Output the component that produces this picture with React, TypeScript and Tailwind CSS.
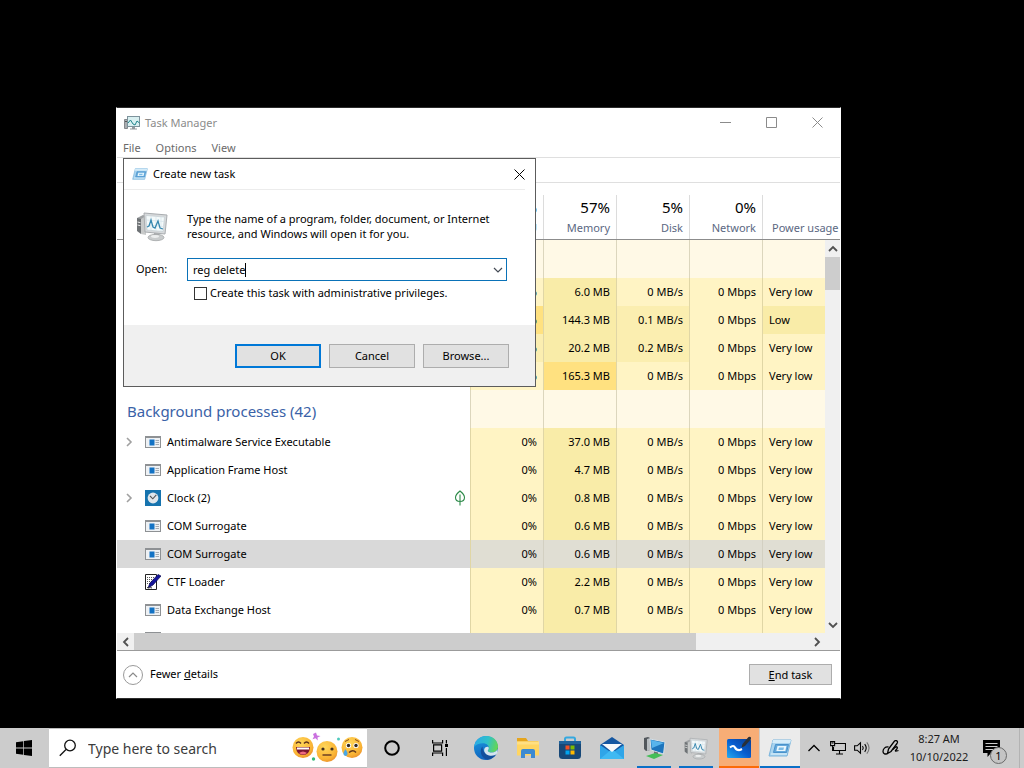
import { useState, type ReactNode } from "react";

type Heat = "light" | "mid" | "warm" | "hot";
type Cell = { text: string; heat: Heat };
type IconName = "window" | "clock" | "ctf";
type Process = {
  name: string;
  icon?: IconName;
  expandable?: boolean;
  eco?: boolean;
  selected?: boolean;
  cells: Cell[];
};

const HEAT: Record<Heat, string> = {
  light: "bg-[#fff4c4]",
  mid: "bg-[#f9eca8]",
  warm: "bg-[#fbeeb0]",
  hot: "bg-[#ffe180]",
};

function usage(
  cpu: string,
  memory: string,
  disk: string,
  power: string,
  heats: Heat[] = ["light", "mid", "light", "light", "light"],
): Cell[] {
  return [cpu, memory, disk, "0 Mbps", power].map((text, i) => ({ text, heat: heats[i] }));
}

const APPS: Process[] = [
  { name: "", cells: usage("0%", "6.0 MB", "0 MB/s", "Very low") },
  { name: "", cells: usage("0%", "144.3 MB", "0.1 MB/s", "Low", ["hot", "mid", "warm", "light", "mid"]) },
  { name: "", cells: usage("0%", "20.2 MB", "0.2 MB/s", "Very low", ["warm", "mid", "warm", "light", "light"]) },
  { name: "", cells: usage("0%", "165.3 MB", "0 MB/s", "Very low", ["light", "hot", "light", "light", "light"]) },
];

const BACKGROUND: Process[] = [
  { name: "Antimalware Service Executable", icon: "window", expandable: true, cells: usage("0%", "37.0 MB", "0 MB/s", "Very low") },
  { name: "Application Frame Host", icon: "window", cells: usage("0%", "4.7 MB", "0 MB/s", "Very low") },
  { name: "Clock (2)", icon: "clock", expandable: true, eco: true, cells: usage("0%", "0.8 MB", "0 MB/s", "Very low") },
  { name: "COM Surrogate", icon: "window", cells: usage("0%", "0.6 MB", "0 MB/s", "Very low") },
  { name: "COM Surrogate", icon: "window", selected: true, cells: usage("0%", "0.6 MB", "0 MB/s", "Very low") },
  { name: "CTF Loader", icon: "ctf", cells: usage("0%", "2.2 MB", "0 MB/s", "Very low") },
  { name: "Data Exchange Host", icon: "window", cells: usage("0%", "0.7 MB", "0 MB/s", "Very low") },
  { name: "", icon: "window", cells: usage("", "", "", "").map((c) => ({ ...c, text: "" })) },
];

/* ---------- small icons ---------- */

function Chevron({ dir, className = "", stroke = 1.5 }: { dir: "up" | "down" | "left" | "right"; className?: string; stroke?: number }) {
  const d = { up: "M1 7 5 3l4 4", down: "M1 3l4 4 4-4", left: "M7 1 3 5l4 4", right: "M3 1l4 4-4 4" }[dir];
  return (
    <svg viewBox="0 0 10 10" className={className} fill="none" stroke="currentColor" strokeWidth={stroke} aria-hidden="true">
      <path d={d} />
    </svg>
  );
}

function CloseIcon({ className = "" }: { className?: string }) {
  return (
    <svg viewBox="0 0 11 11" className={className} fill="none" stroke="currentColor" aria-hidden="true">
      <path d="M.5.5l10 10M10.5.5l-10 10" />
    </svg>
  );
}

function ProcessIcon({ name }: { name: IconName }) {
  if (name === "clock") {
    return (
      <svg viewBox="0 0 16 16" className="size-4" aria-hidden="true">
        <rect width="16" height="16" fill="#1673ae" />
        <circle cx="8" cy="8" r="5.4" fill="#dfe6ec" />
        <path d="M5 6 7.800 8.800l3.500-4" stroke="#555" strokeWidth="1.1" fill="none" />
      </svg>
    );
  }
  if (name === "ctf") {
    return (
      <svg viewBox="0 0 16 16" className="size-4" aria-hidden="true">
        <path d="M.5.500h11v15H.5z" fill="#fff" stroke="#222" />
        <path d="M2 3.500h8M2 5.500h8M2 7.500h6M2 9.500h5" stroke="#555" strokeDasharray="1 1" />
        <path d="M13 .500l3 1.500-8 9-5 3 2-5z" fill="#15159a" stroke="#08084e" strokeWidth=".7" />
        <path d="M2 13.500c2 1 3-.5 5 .5" stroke="#333" fill="none" />
      </svg>
    );
  }
  return (
    <svg viewBox="0 0 16 16" className="size-4" aria-hidden="true">
      <rect x=".5" y="2.500" width="15" height="11" fill="#eef1f4" stroke="#8e9194" />
      <path d="M0 3h16" stroke="#8e9194" strokeWidth="2" />
      <rect x="4.500" y="5.500" width="5" height="6" fill="#1272c4" />
      <path d="M10.500 6.500H14M10.500 8.500H14M10.500 10.500H14" stroke="#a4abb3" />
    </svg>
  );
}

function MonitorIcon({ className = "" }: { className?: string }) {
  return (
    <svg viewBox="0 0 16 16" className={className} aria-hidden="true">
      <path d="M.5 4.500h3v9h-3z" fill="#a9aeb2" stroke="#85898d" />
      <path d="M1 6.500h2" stroke="#555" />
      <rect x="3.500" y="1.500" width="12" height="10" fill="#d9f0f1" stroke="#7d939c" />
      <path d="M4 8l2.500-3 2.500 4 2 1 2-4 2.500 2" stroke="#21858d" fill="none" />
      <path d="M8 12h3v1.500h2v1H6v-1h2z" fill="#91979c" />
    </svg>
  );
}

function LargeMonitorIcon({ className = "" }: { className?: string }) {
  return (
    <svg viewBox="0 0 32 32" className={className} aria-hidden="true">
      <path d="M1 8l6-3 3 1v18l-5-1-4-3z" fill="#9fa2a4" />
      <path d="M1 8l4 1v15l-4-3z" fill="#6f7376" />
      <path d="M5 9l5-3v19l-5-1z" fill="#c8caca" />
      <path d="M1.500 12l3 .7M1.500 15l3 .7" stroke="#e7e7e7" />
      <path d="M8 3l23 2-2 19-20-2z" fill="#d7dadc" stroke="#a9adb0" />
      <path d="M10 5.500l18.500 1.600L27 21.500 11 20z" fill="#f4fafb" stroke="#bfc9ce" strokeWidth=".6" />
      <path d="M10.500 10l17.500 1.500M10.700 15l17 1.500M15 6v14M20 6.500v14M25 7v14" stroke="#d4e3e9" strokeWidth=".7" />
      <path d="M11 17l2-1 2-6 2 7 2 1 3-7 2 7 3 1" stroke="#3688b0" strokeWidth="1.300" fill="none" />
      <path d="M18 23l5 .5 1 3h-6z" fill="#a8abad" />
      <ellipse cx="20" cy="27.500" rx="8" ry="3.200" fill="#c9cccd" stroke="#9c9fa1" strokeWidth=".7" />
      <ellipse cx="19" cy="26.500" rx="4" ry="1.400" fill="#eceeee" />
    </svg>
  );
}

function RunIcon({ className = "" }: { className?: string }) {
  return (
    <svg viewBox="0 0 24 20" className={className} aria-hidden="true">
      <path d="M5 2h18l-4 16H1z" fill="#a9d4ef" stroke="#79b4dc" />
      <path d="M5 2h18l-.8 3H4.200z" fill="#d5ecf9" />
      <path d="M7.500 6.500h13l-2 8h-13z" fill="#65a9db" stroke="#4a92cb" />
      <path d="M9.500 8h9l-1.200 5h-9z" fill="#e8f6fd" />
      <path d="M11 9.500h5l-.6 2.500h-5z" fill="#7bbbe5" />
      <path d="M3 16h16" stroke="#e0f2fb" />
    </svg>
  );
}

function LeafIcon() {
  return (
    <svg viewBox="0 0 12 16" className="h-4 w-3" fill="none" stroke="#2e8b4a" strokeWidth="1.100" aria-label="Efficiency mode">
      <path d="M6 1C3.500 3 1.500 5 1.500 7.500S3.500 11.500 6 11.500s4.500-1.500 4.500-4S8.500 3 6 1zM6 4.500v11" />
    </svg>
  );
}

/* ---------- process table ---------- */

function GroupRow({ label }: { label: string }) {
  return (
    <tr className="h-[38px]">
      <th scope="rowgroup" className="border-r border-[#dcd6bd] pt-1 pl-2.5 text-left text-[15px] leading-5 font-normal text-[#3a62a7]">
        {label}
      </th>
      {[0, 1, 2, 3].map((i) => (
        <td key={i} className="border-r border-[#dcd6bd] bg-[#fff9e6]" />
      ))}
      <td className="bg-[#fff9e6]" />
    </tr>
  );
}

function ProcessRow({ process }: { process: Process }) {
  const { name, icon, expandable, eco, selected, cells } = process;
  return (
    <tr className={selected ? "h-7 bg-[#d9d9d9]" : "h-7"}>
      <td className="border-r border-[#e0d6a5]">
        <div className="flex items-center pr-1">
          <span className="flex w-7 justify-center pr-1">
            {expandable && (
              <button aria-label={`Expand ${name}`} className="text-[#a0a0a0]">
                <Chevron dir="right" className="size-2.5" stroke={1.6} />
              </button>
            )}
          </span>
          {icon && <ProcessIcon name={icon} />}
          <span className="flex-1 pl-1.5">{name}</span>
          {eco && <LeafIcon />}
        </div>
      </td>
      {cells.map((cell, i) => {
        const last = i === cells.length - 1;
        const tone = selected ? "bg-[#e0ded3] border-[#d3d0c2]" : `${HEAT[cell.heat]} border-[#e0d6a5]`;
        return (
          <td key={i} className={`${tone} whitespace-nowrap ${last ? "pl-1.5" : "border-r pr-1.5 text-right"}`}>
            {cell.text}
          </td>
        );
      })}
    </tr>
  );
}

function ProcessTable() {
  const columns: [string, string][] = [
    ["%", "CPU"],
    ["57%", "Memory"],
    ["5%", "Disk"],
    ["0%", "Network"],
    ["", "Power usage"],
  ];
  return (
    <div className="flex min-h-0 flex-1 overflow-hidden">
      <div className="min-w-0 flex-1">
        <table className="w-full table-fixed border-separate border-spacing-0">
          <colgroup>
            <col />
            <col className="w-[73px]" />
            <col className="w-[73px]" />
            <col className="w-[73px]" />
            <col className="w-[73px]" />
            <col className="w-[62px]" />
          </colgroup>
          <thead>
            <tr className="h-[57px]">
              <th className="border-b border-[#8c8c8c]" aria-label="Name" />
              {columns.map(([value, label], i) => (
                <th key={label} scope="col" className="border-b border-[#8c8c8c] p-0 align-bottom font-normal">
                  <div className={`flex h-11 flex-col justify-end gap-[3px] pb-[3px] whitespace-nowrap ${i < 4 ? "items-end border-r border-[#dcdcdc] pr-1.5" : "items-start pl-[9px]"}`}>
                    <span className="text-[15px] leading-5 text-black">{value}</span>
                    <span className="leading-4 text-[#5b6782]">{label}</span>
                  </div>
                </th>
              ))}
            </tr>
          </thead>
          <tbody>
            <GroupRow label="" />
            {APPS.map((p, i) => (
              <ProcessRow key={i} process={p} />
            ))}
            <GroupRow label="Background processes (42)" />
            {BACKGROUND.map((p, i) => (
              <ProcessRow key={i} process={p} />
            ))}
          </tbody>
        </table>
      </div>
      <div className="flex w-[15px] flex-col text-[#505050]">
        <div className="h-[57px] shrink-0 border-b border-[#8c8c8c]" />
        <div className="flex min-h-0 flex-1 flex-col items-center bg-[#f0f0f0]">
          <button aria-label="Scroll up" className="flex h-[17px] items-center">
            <Chevron dir="up" className="size-2.5" stroke={1.8} />
          </button>
          <div className="h-[33px] w-full bg-[#cdcdcd]" />
          <div className="flex-1" />
          <button aria-label="Scroll down" className="flex h-[17px] items-center">
            <Chevron dir="down" className="size-2.5" stroke={1.8} />
          </button>
        </div>
      </div>
    </div>
  );
}

/* ---------- dialog ---------- */

function DialogButton({ children, primary }: { children: ReactNode; primary?: boolean }) {
  return (
    <button className={`h-6 w-[86px] bg-[#e1e1e1] leading-4 ${primary ? "border-2 border-[#0078d7]" : "border border-[#adadad]"}`}>
      {children}
    </button>
  );
}

function CreateTaskDialog() {
  const [command, setCommand] = useState("reg delete");
  return (
    <section
      role="dialog"
      aria-label="Create new task"
      className="absolute top-[50px] left-1.5 flex h-[229px] w-[413px] flex-col border border-[#5c5c5c] bg-white text-black"
    >
      <header className="mr-2.5 flex h-[31px] items-center border-b border-[#ececec] pl-2">
        <RunIcon className="h-3.5 w-4" />
        <h2 className="flex-1 pl-[5px]">Create new task</h2>
        <button aria-label="Close">
          <CloseIcon className="size-[11px]" />
        </button>
      </header>
      <div className="flex-1 px-3 pt-5">
        <div className="flex items-center">
          <LargeMonitorIcon className="size-8" />
          <p className="pl-[19px] leading-[15px]">
            Type the name of a program, folder, document, or Internet
            <br />
            resource, and Windows will open it for you.
          </p>
        </div>
        <div className="flex items-center pt-4">
          <label htmlFor="command" className="w-[51px]">
            Open:
          </label>
          <div className="flex h-[23px] w-80 items-center border border-[#0a72b8] pl-[5px]">
            <input
              id="command"
              value={command}
              onChange={(e) => setCommand(e.target.value)}
              className="field-sizing-content leading-4 caret-transparent outline-none"
            />
            <span className="h-3.5 w-px bg-black" />
            <span className="flex-1" />
            <button aria-label="Show recent commands" className="pr-[3px] text-[#454b55]">
              <Chevron dir="down" className="size-2.5" stroke={1.2} />
            </button>
          </div>
        </div>
        <div className="flex items-center pt-1 pl-[58px]">
          <input id="admin" type="checkbox" className="size-[13px] appearance-none border border-[#333] bg-white checked:bg-[#0078d7]" />
          <label htmlFor="admin" className="pl-[3px] leading-4">
            Create this task with administrative privileges.
          </label>
        </div>
      </div>
      <footer className="flex h-[61px] justify-end gap-2 bg-[#f0f0f0] pt-[19px] pr-[26px]">
        <DialogButton primary>OK</DialogButton>
        <DialogButton>Cancel</DialogButton>
        <DialogButton>Browse...</DialogButton>
      </footer>
    </section>
  );
}

/* ---------- task manager window ---------- */

function TaskManager() {
  return (
    <section aria-label="Task Manager" className="relative flex min-h-0 flex-1 flex-col border border-[#2c2c2c] border-x-white bg-white text-[11px] text-black">
      <header className="flex h-[29px] items-center pl-[7px] text-[#8b8b8b]">
        <MonitorIcon className="size-4" />
        <h1 className="flex-1 pl-[5px] leading-4">Task Manager</h1>
        <button aria-label="Minimize" className="flex h-full w-[46px] items-center justify-center">
          <svg viewBox="0 0 11 11" className="size-[11px]" stroke="currentColor" aria-hidden="true">
            <path d="M0 5.500h11" />
          </svg>
        </button>
        <button aria-label="Maximize" className="flex h-full w-[46px] items-center justify-center">
          <svg viewBox="0 0 11 11" className="size-[11px]" stroke="currentColor" fill="none" aria-hidden="true">
            <path d="M.5.500h10v10H.5z" />
          </svg>
        </button>
        <button aria-label="Close window" className="flex h-full w-[46px] items-center justify-center">
          <CloseIcon className="size-[11px]" />
        </button>
      </header>
      <nav className="flex h-5 items-center gap-[15px] pt-0.5 pl-1.5 text-[#6a6a6a]">
        <button>File</button>
        <button>Options</button>
        <button>View</button>
      </nav>
      <div className="h-[26px] shrink-0 border-y border-[#dfdfdf]" />
      <ProcessTable />
      <div className="flex h-[17px] items-center bg-[#f0f0f0] pr-[15px] text-[#505050]">
        <button aria-label="Scroll left" className="flex w-[17px] justify-center">
          <Chevron dir="left" className="size-2.5" stroke={1.8} />
        </button>
        <div className="flex h-full flex-1 items-center">
          <div className="h-full w-5/6 bg-[#cdcdcd]" />
        </div>
        <button aria-label="Scroll right" className="flex w-[17px] justify-center">
          <Chevron dir="right" className="size-2.5" stroke={1.8} />
        </button>
      </div>
      <footer className="flex h-12 items-center justify-between border-t border-[#9b9b9b] pr-2 pl-1.5">
        <button className="flex items-center gap-[7px]">
          <span className="flex size-5 items-center justify-center rounded-full border border-[#9a9a9a] text-[#8a8a8a]">
            <Chevron dir="up" className="size-2.5" stroke={1.2} />
          </span>
          <span>
            Fewer <u>d</u>etails
          </span>
        </button>
        <button className="h-[21px] w-[83px] border border-[#adadad] bg-[#e1e1e1] leading-4">
          <u>E</u>nd task
        </button>
      </footer>
      <CreateTaskDialog />
    </section>
  );
}

/* ---------- taskbar ---------- */

function EmojiStrip() {
  return (
    <svg viewBox="0 0 72 32" className="h-8 w-[72px]" aria-hidden="true">
      <defs>
        <radialGradient id="face" cx=".4" cy=".3" r=".8">
          <stop offset="0" stopColor="#ffd75a" />
          <stop offset=".7" stopColor="#f9b233" />
          <stop offset="1" stopColor="#e5852a" />
        </radialGradient>
      </defs>
      <circle cx="12" cy="15.500" r="10.500" fill="url(#face)" />
      <path d="M5 11.500q2.500-3 5 0M13 11.500q2.500-3 5 0" stroke="#5b321d" strokeWidth="1.500" fill="none" />
      <path d="M5 15h14q-.5 8-7 8t-7-8z" fill="#7b1531" />
      <path d="M6 15.500h12v2H6z" fill="#fff" />
      <path d="M8 21q4-3 8 0-4 3-8 0z" fill="#ef6a80" />
      <circle cx="36" cy="19.500" r="10.500" fill="url(#face)" />
      <circle cx="32" cy="17" r="1.600" fill="#43301f" />
      <circle cx="41" cy="17" r="1.600" fill="#43301f" />
      <path d="M31.500 23h9" stroke="#6d4022" strokeWidth="1.500" />
      <circle cx="61" cy="15.500" r="10.500" fill="url(#face)" />
      <path d="M54 9.500l4-2M64 7.500l4 2" stroke="#8d501d" />
      <circle cx="57.500" cy="13.500" r="2.600" fill="#fff" />
      <circle cx="65" cy="13.500" r="2.600" fill="#fff" />
      <circle cx="57.500" cy="13.500" r="1.700" fill="#312923" />
      <circle cx="65" cy="13.500" r="1.700" fill="#312923" />
      <path d="M58 20.500q4-3.500 7 0" stroke="#633719" strokeWidth="1.500" fill="none" />
      <path d="M54.500 17q-4 6 0 7 4-1 0-7z" fill="#49a7e6" />
      <path d="M25 .5l1 3 3.500.5-3 1.500.3 3-2.300-2.200-3 1 1.500-2.800-1-2.500z" fill="#ca70df" />
      <circle cx="47.500" cy="7" r="1.500" fill="#50c9bd" />
      <circle cx="22.500" cy="27" r="1.700" fill="#35b978" />
    </svg>
  );
}

function EdgeIcon() {
  return (
    <svg viewBox="0 0 24 24" className="size-6" aria-hidden="true">
      <defs>
        <linearGradient id="edgeTop" x1="0" y1=".3" x2="1" y2=".5">
          <stop offset="0" stopColor="#2aa9e8" />
          <stop offset=".55" stopColor="#2fc1c9" />
          <stop offset="1" stopColor="#65d652" />
        </linearGradient>
        <linearGradient id="edgeBase" x1="0" y1="0" x2=".3" y2="1">
          <stop offset="0" stopColor="#1b9de2" />
          <stop offset="1" stopColor="#1063bd" />
        </linearGradient>
      </defs>
      <circle cx="12" cy="12" r="12" fill="url(#edgeBase)" />
      <path d="M0 11C1 4.500 6 0 12.300 0 19 0 24 4.800 24 10.500c0 3.500-2.600 6-6 6-2.400 0-4.200-.9-4.200-1.800 0-.7 1-1 1-2.900 0-2.200-2.300-4.500-5.800-4.500-4 0-7.500 1.700-9 3.700z" fill="url(#edgeTop)" />
      <path d="M8.500 10.500C5.500 13 6 22 13.500 23.800 17.500 23.400 20.500 21 22 18.300c-5 2.400-13.500.7-13.500-7.800z" fill="#134f9c" />
      <path d="M14.800 12c0 1.700-1 2-1 2.700 0 .9 1.800 1.800 4.200 1.800 2.600 0 4.700-1.400 5.500-3.500v4c-1 2-5 3.500-8.500 2.500-3.500-.9-5.500-4-4.700-6.500.8-2.600 4.500-3 4.500-1z" fill="#d5e5ee" />
    </svg>
  );
}

function FolderIcon() {
  return (
    <svg viewBox="0 0 24 20" className="h-5 w-6" aria-hidden="true">
      <path d="M1 0h9l2 3h10v4H1z" fill="#e5a51e" />
      <path d="M1 3.500h22v14H1z" fill="#ffd562" />
      <path d="M1 3.500h22v3H1z" fill="#ffdf83" />
      <path d="M5 20v-7q0-2 2-2h10q2 0 2 2v7h-4v-4H9v4z" fill="#3c8ad1" />
    </svg>
  );
}

function StoreIcon() {
  return (
    <svg viewBox="0 0 24 24" className="size-6" aria-hidden="true">
      <path d="M7 6V3q0-1.500 1.500-1.500h7Q17 1.500 17 3v3" fill="none" stroke="#35a8df" strokeWidth="2" />
      <path d="M1 5h22v14.500q0 3.500-3.500 3.500h-15Q1 23 1 19.500z" fill="#174878" />
      <path d="M1 5h22v3H1z" fill="#20639b" />
      <path d="M7.500 9.500h4v4h-4z" fill="#f25022" />
      <path d="M12.500 9.500h4v4h-4z" fill="#7fba00" />
      <path d="M7.500 14.500h4v4h-4z" fill="#00a4ef" />
      <path d="M12.500 14.500h4v4h-4z" fill="#ffb900" />
    </svg>
  );
}

function MailIcon() {
  return (
    <svg viewBox="0 0 26 24" className="h-6 w-[26px]" aria-hidden="true">
      <path d="M13 1 25 9v14H1V9z" fill="#1557a1" />
      <path d="M1 9l12 8 12-8v14H1z" fill="#2fa5e8" />
      <path d="M1 23l12-10 12 10z" fill="#40b9f2" />
      <path d="M3 8h20l-10 8z" fill="#f7f9fb" />
    </svg>
  );
}

function DesktopAppIcon() {
  return (
    <svg viewBox="0 0 24 24" className="size-6" aria-hidden="true">
      <path d="M2 2l4-1 2 1v12l-4 1-2-2z" fill="#52575c" />
      <path d="M5 3l3-1v12l-3 1z" fill="#b8bdc1" />
      <path d="M8 3l15 3-1.500 12L9 14z" fill="#1d75bd" stroke="#d7e0e5" />
      <path d="M9 4l13 3-12 5z" fill="#58b4ec" />
      <path d="M12 15.500l4 1v2h-4z" fill="#6c7073" />
      <path d="M4 20l9-3 8 2-9 4z" fill="#44bd58" />
    </svg>
  );
}

function WhiteboardIcon() {
  return (
    <svg viewBox="0 0 26 24" className="h-6 w-[26px]" aria-hidden="true">
      <defs>
        <linearGradient id="board" x1="0" y1="1" x2="1" y2="0">
          <stop offset="0" stopColor="#25abf0" />
          <stop offset=".5" stopColor="#075dd0" />
          <stop offset="1" stopColor="#0a3d91" />
        </linearGradient>
      </defs>
      <rect x="1" y="3" width="24" height="19" rx="1.500" fill="url(#board)" />
      <path d="M4 11.500q3.500-3 5 0t5 2.500l2-1" fill="none" stroke="#fff" strokeWidth="2.200" />
      <path d="M15.500 11.500l1-3.500 6-7q3-1 2.500 2l-6 7z" fill="#293039" />
    </svg>
  );
}

function TaskButton({ label, state = "idle", children }: { label: string; state?: "idle" | "running" | "alert" | "active"; children: ReactNode }) {
  const tone = {
    idle: "w-[42px]",
    running: "w-[42px]",
    alert: "w-10 bg-[#f7ad76]",
    active: "w-10 bg-[#ebebeb]",
  }[state];
  const bar = {
    idle: "",
    running: "mx-1 bg-[#0b70c7]",
    alert: "bg-[#fb6a08]",
    active: "bg-[#0b70c7]",
  }[state];
  return (
    <button aria-label={label} className={`flex h-full shrink-0 flex-col ${tone}`}>
      <span className="flex flex-1 items-center justify-center self-stretch pt-0.5">{children}</span>
      <span className={`h-0.5 self-stretch ${bar}`} />
    </button>
  );
}

function TrayButton({ label, width, children }: { label: string; width: string; children: ReactNode }) {
  return (
    <button aria-label={label} className={`flex h-full shrink-0 items-center justify-center ${width}`}>
      {children}
    </button>
  );
}

function Taskbar() {
  return (
    <nav aria-label="Taskbar" className="flex h-10 shrink-0 items-center bg-[#cccccc] text-black">
      <button aria-label="Start" className="flex h-full w-12 shrink-0 items-center justify-center">
        <svg viewBox="0 0 16 16" className="size-4" aria-hidden="true">
          <path d="M0 2.200 7.300 1.200v6.400H0zM8 1.100 16 0v7.600H8zM0 8.400h7.300v6.400L0 13.800zM8 8.400h8V16l-8-1.100z" />
        </svg>
      </button>
      <div className="ml-px flex h-full w-[318px] items-center border-t border-b border-[#bdbdbd] bg-white pr-1 pl-2.5">
        <svg viewBox="0 0 18 18" className="size-[18px] shrink-0" fill="none" stroke="#111" strokeWidth="1.300" aria-hidden="true">
          <circle cx="11" cy="6.500" r="5.300" />
          <path d="M7 10.500.8 16.800" />
        </svg>
        <input
          type="search"
          aria-label="Search"
          placeholder="Type here to search"
          className="min-w-0 flex-1 pt-px pl-[11px] text-sm outline-none placeholder:text-[#3c3c3c]"
        />
        <EmojiStrip />
      </div>
      <TrayButton label="Cortana" width="w-[49px]">
        <svg viewBox="0 0 16 16" className="size-4" fill="none" stroke="currentColor" strokeWidth="2" aria-hidden="true">
          <circle cx="8" cy="8" r="6.800" />
        </svg>
      </TrayButton>
      <TrayButton label="Task view" width="w-12">
        <svg viewBox="0 0 16 16" className="size-4" fill="none" stroke="currentColor" strokeWidth="1.200" aria-hidden="true">
          <path d="M.6 0v3h10V0M.6 16v-3h10v3M1.600 4.800h8v6.400h-8zM14.400 0v3.500M14.400 8v8" />
          <path d="M13 4h3v3h-3z" fill="currentColor" stroke="none" />
        </svg>
      </TrayButton>
      <div className="ml-px flex h-full">
        <TaskButton label="Edge"><EdgeIcon /></TaskButton>
        <TaskButton label="File Explorer"><FolderIcon /></TaskButton>
        <TaskButton label="Store"><StoreIcon /></TaskButton>
        <TaskButton label="Mail"><MailIcon /></TaskButton>
        <TaskButton label="Computer" state="running"><DesktopAppIcon /></TaskButton>
        <TaskButton label="Task Manager" state="running"><LargeMonitorIcon className="size-6" /></TaskButton>
        <div className="ml-0.5 flex gap-px">
          <TaskButton label="Whiteboard" state="alert"><WhiteboardIcon /></TaskButton>
          <TaskButton label="Create new task" state="active"><RunIcon className="h-5 w-6" /></TaskButton>
        </div>
      </div>
      <div className="ml-auto flex h-full items-center">
        <TrayButton label="Show hidden icons" width="w-6">
          <svg viewBox="0 0 12 8" className="h-2 w-3" fill="none" stroke="currentColor" strokeWidth="1.300" aria-hidden="true">
            <path d="M.5 7 6 1.500 11.500 7" />
          </svg>
        </TrayButton>
        <TrayButton label="Network" width="w-6">
          <svg viewBox="0 0 16 14" className="h-3.5 w-4" fill="none" stroke="currentColor" strokeWidth="1.100" aria-hidden="true">
            <path d="M5 2.500h10.500v7H3.500V6M9.500 9.500v3.500M6 13h7" />
            <path d="M.6.600h4v4h-4zM2.600 4.600V10" />
            <path d="M1.700 2h1.800" />
          </svg>
        </TrayButton>
        <TrayButton label="Volume" width="w-6">
          <svg viewBox="0 0 16 14" className="h-3.5 w-4" fill="none" stroke="currentColor" strokeWidth="1.100" aria-hidden="true">
            <path d="M.6 4.800h2.600L6.500 1.800v10.400L3.200 9.200H.6z" />
            <path d="M8.500 5q1.500 2 0 4M10.700 3.200q3 3.800 0 7.600" />
            <path d="M12.800 1.400q4.500 5.600 0 11.200" stroke="#777" />
          </svg>
        </TrayButton>
        <TrayButton label="Pen" width="w-[34px]">
          <svg viewBox="0 0 18 16" className="h-4 w-[18px]" fill="none" stroke="currentColor" strokeWidth="1.300" aria-hidden="true">
            <path d="M5.500 13.500 6.500 9 12.500 1q1.500-1 2.500 0t0 2.500L9 11.500z" />
            <path d="M6.500 7C3 6.500 1 9 1 11.500s2.500 3 4.500 2M11 9.500q3-3.500 4-2.500t-1 3 2.500.5" />
          </svg>
        </TrayButton>
        <div className="w-[62px] text-center text-[11px] leading-[18px] whitespace-nowrap text-[#1c1c1c]">
          <div>8:27 AM</div>
          <div>10/10/2022</div>
        </div>
        <button aria-label="Notifications" className="relative flex h-full w-[49px] shrink-0 items-center pl-[13px]">
          <svg viewBox="0 0 17 17" className="size-[17px]" aria-hidden="true">
            <path d="M0 0h17v13H8l-3.500 4v-4H0z" />
            <path d="M2.500 3.500h12M2.500 6.500h12M2.500 9.500h9" stroke="#ccc" />
          </svg>
          <span className="absolute right-3 bottom-1 flex size-[17px] items-center justify-center rounded-full border border-[#6a6a6a] bg-[#c4c4c4] text-[11px] leading-none">
            1
          </span>
        </button>
        <div className="mr-1 h-full w-px bg-[#b3b3b3]" />
      </div>
    </nav>
  );
}

export default function App() {
  return (
    <div className="flex h-screen min-h-[640px] flex-col bg-black font-['Noto_Sans',sans-serif]">
      <main className="flex min-h-0 flex-1 pt-[107px] pr-[183px] pb-[29px] pl-[116px]">
        <TaskManager />
      </main>
      <Taskbar />
    </div>
  );
}
